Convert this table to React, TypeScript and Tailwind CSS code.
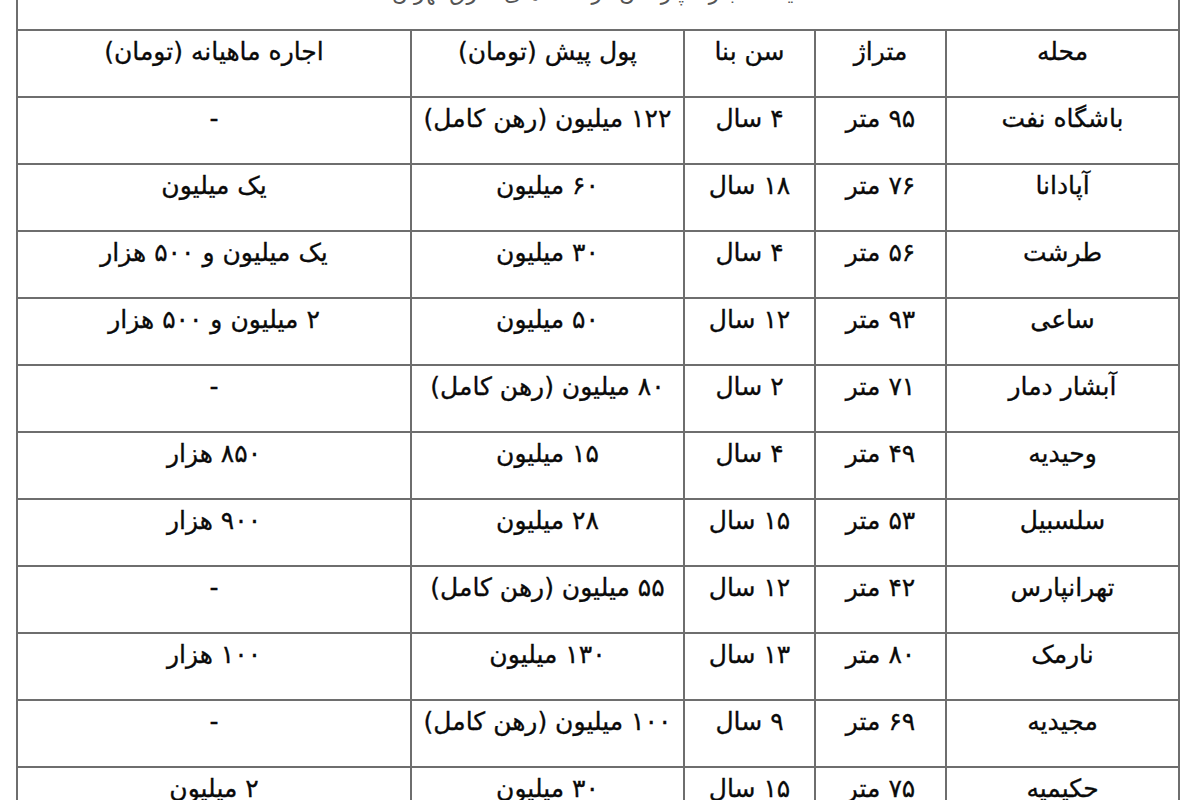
import React from 'react';

const rows = [
  ['باشگاه نفت', '۹۵ متر', '۴ سال', '۱۲۲ میلیون (رهن کامل)', '-'],
  ['آپادانا', '۷۶ متر', '۱۸ سال', '۶۰ میلیون', 'یک میلیون'],
  ['طرشت', '۵۶ متر', '۴ سال', '۳۰ میلیون', 'یک میلیون و ۵۰۰ هزار'],
  ['ساعی', '۹۳ متر', '۱۲ سال', '۵۰ میلیون', '۲ میلیون و ۵۰۰ هزار'],
  ['آبشار دمار', '۷۱ متر', '۲ سال', '۸۰ میلیون (رهن کامل)', '-'],
  ['وحیدیه', '۴۹ متر', '۴ سال', '۱۵ میلیون', '۸۵۰ هزار'],
  ['سلسبیل', '۵۳ متر', '۱۵ سال', '۲۸ میلیون', '۹۰۰ هزار'],
  ['تهرانپارس', '۴۲ متر', '۱۲ سال', '۵۵ میلیون (رهن کامل)', '-'],
  ['نارمک', '۸۰ متر', '۱۳ سال', '۱۳۰ میلیون', '۱۰۰ هزار'],
  ['مجیدیه', '۶۹ متر', '۹ سال', '۱۰۰ میلیون (رهن کامل)', '-'],
  ['حکیمیه', '۷۵ متر', '۱۵ سال', '۳۰ میلیون', '۲ میلیون'],
];

const headers = ['محله', 'متراژ', 'سن بنا', 'پول پیش (تومان)', 'اجاره ماهیانه (تومان)'];

function Cell({ children }: { children: React.ReactNode }) {
  return (
    <div className="bg-white h-[65px] pt-[5px] text-center text-[25px] leading-[31px] text-[#0a0a0a] [-webkit-text-stroke:0.3px_#0a0a0a]">
      {children}
    </div>
  );
}

export default function App() {
  return (
    <div className="w-[1200px] h-[800px] overflow-hidden bg-white font-['DejaVu_Sans',sans-serif]">
      <div
        dir="rtl"
        className="ml-[16px] mt-[-38px] w-[1164px] grid grid-cols-[231px_129px_129px_271px_392px] gap-[2px] p-[2px] bg-[#6e6e6e]"
      >
        <div className="col-span-5 bg-white h-[65px] pt-[14px] text-center text-[22px] leading-[30px] text-[#555]">
          قیمت اجاره آپارتمان در محله‌های شرق تهران
        </div>
        {headers.map((h) => (
          <Cell key={h}>{h}</Cell>
        ))}
        {rows.map((r, i) =>
          r.map((c, j) => <Cell key={i + '-' + j}>{c}</Cell>)
        )}
      </div>
    </div>
  );
}
